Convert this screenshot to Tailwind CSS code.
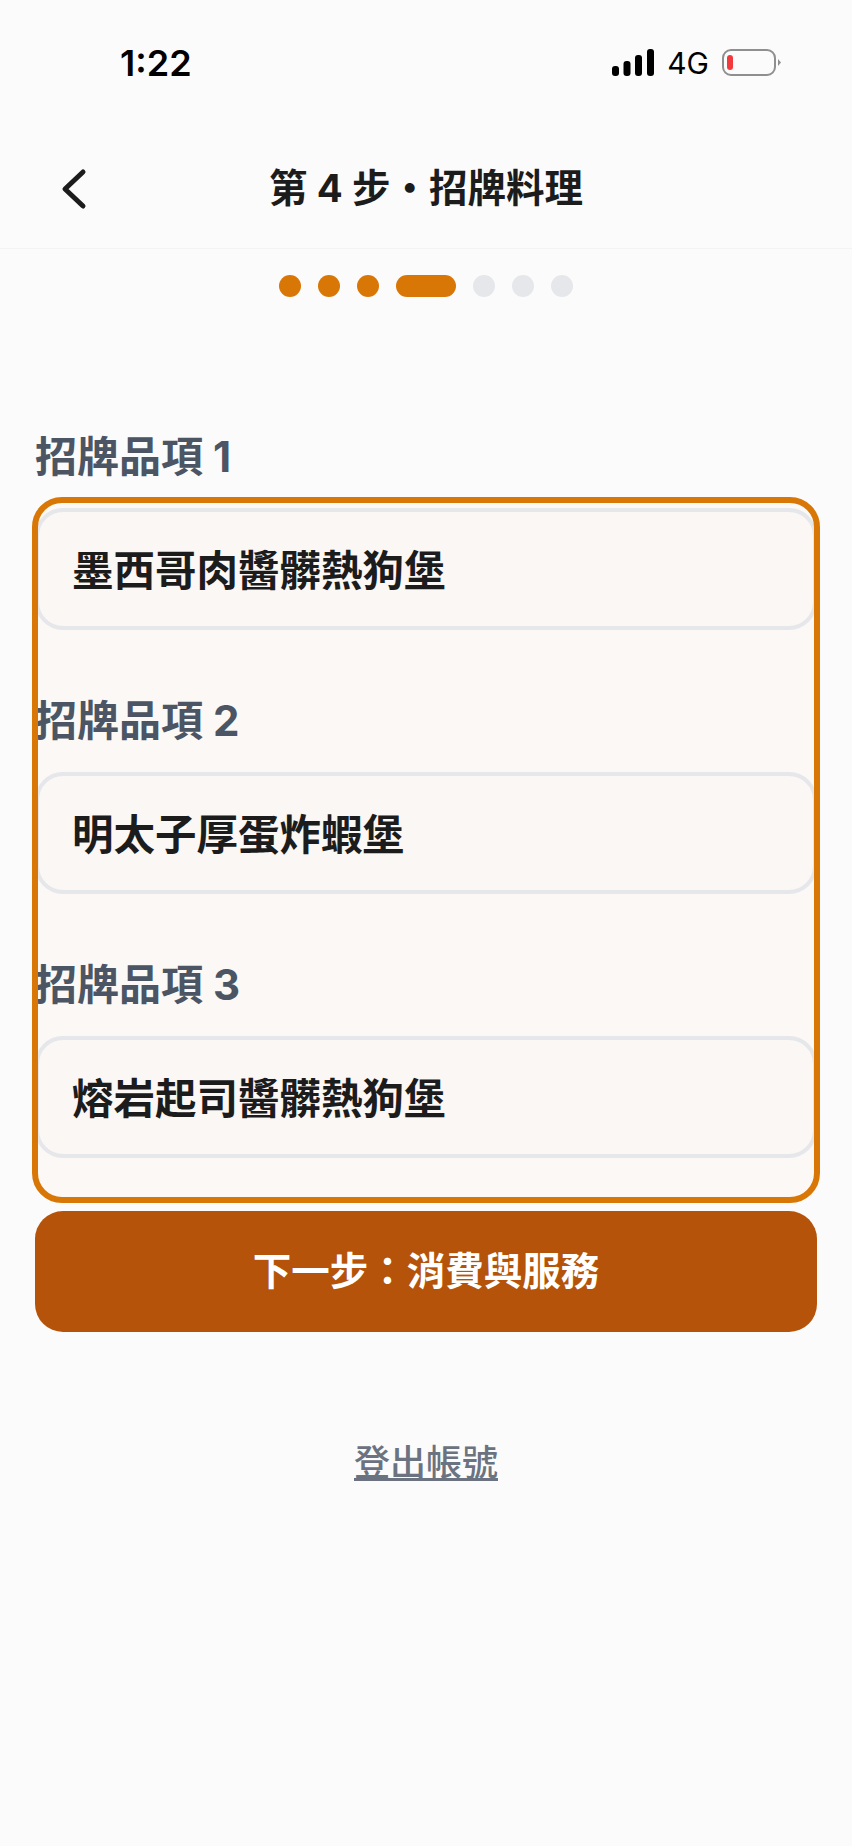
<!DOCTYPE html>
<html lang="zh-Hant">
<head>
  <meta charset="UTF-8" />
  <meta name="viewport" content="width=device-width, initial-scale=1.0" />
  <title>第 4 步・招牌料理</title>
  <script src="https://cdn.jsdelivr.net/npm/@tailwindcss/browser@4"></script>
</head>
<body class="bg-[#fbfbfb] text-[#1c1c1c] min-h-screen font-['Inter','Noto_Sans_CJK_TC',sans-serif]">

  <!-- status bar -->
  <div class="h-[104px] pl-[120px] pr-[70px] pt-[41px] flex justify-between items-start">
    <span class="text-[36px] leading-[44px] font-semibold text-black">1:22</span>
    <div class="flex items-center mt-[8px]">
      <svg width="42" height="28" viewBox="0 0 42 28" fill="#000">
        <rect x="0" y="17" width="7" height="10" rx="3"/>
        <rect x="11.500" y="12" width="7" height="15" rx="3"/>
        <rect x="23" y="6" width="7" height="21" rx="3"/>
        <rect x="35" y="0" width="7" height="27" rx="3"/>
      </svg>
      <span class="ml-[13px] text-[30px] leading-[28px] text-black">4G</span>
      <svg class="ml-[13px]" width="60" height="28" viewBox="0 0 60 28">
        <rect x="1" y="1" width="52" height="25" rx="8" fill="none" stroke="#8f8f8f" stroke-width="2"/>
        <rect x="5" y="6" width="6" height="15" rx="3" fill="#f23a3c"/>
        <path d="M56 10l3 3.500-3 3.500z" fill="#8f8f8f"/>
      </svg>
    </div>
  </div>

  <!-- header -->
  <header class="h-[145px] relative flex items-center justify-center border-b border-[#f3f3f3]">
    <svg class="absolute left-[60px] top-[64px]" width="28" height="42" viewBox="0 0 28 42" fill="none" stroke="#1c1c1c" stroke-width="5" stroke-linecap="round" stroke-linejoin="round">
      <path d="M23 4L5 21l18 17"/>
    </svg>
    <h1 class="text-[38.500px] leading-[48px] font-bold mt-[24px]">第 4 步・招牌料理</h1>
  </header>

  <!-- steps -->
  <div class="mt-[26px] flex justify-center gap-[17px]">
    <span class="w-[22px] h-[22px] rounded-full bg-[#d97706]"></span>
    <span class="w-[22px] h-[22px] rounded-full bg-[#d97706]"></span>
    <span class="w-[22px] h-[22px] rounded-full bg-[#d97706]"></span>
    <span class="w-[60px] h-[22px] rounded-full bg-[#d97706]"></span>
    <span class="w-[22px] h-[22px] rounded-full bg-[#e5e7eb]"></span>
    <span class="w-[22px] h-[22px] rounded-full bg-[#e5e7eb]"></span>
    <span class="w-[22px] h-[22px] rounded-full bg-[#e5e7eb]"></span>
  </div>

  <main class="mx-[35px] mt-[132px]">
    <label class="block text-[42px] leading-[56px] font-bold text-[#4b5563]">招牌品項 1</label>

    <div class="relative mt-[15px] pt-[8px] pb-[42px] flex flex-col bg-[#fbf8f6] rounded-[28px]">
      <!-- focus ring -->
      <div class="absolute -inset-[3px] border-[6px] border-[#d97706] rounded-[30px] pointer-events-none"></div>

      <div class="h-[122px] rounded-[28px] border-[4px] border-[#e5e7eb] bg-[#faf7f5] pl-[33px] pt-[5px] flex items-center text-[41.500px] font-bold">墨西哥肉醬髒熱狗堡</div>

      <label class="block mt-[63px] text-[42px] leading-[56px] font-bold text-[#4b5563]">招牌品項 2</label>
      <div class="mt-[23px] h-[122px] rounded-[28px] border-[4px] border-[#e5e7eb] bg-[#faf7f5] pl-[33px] pt-[5px] flex items-center text-[41.500px] font-bold">明太子厚蛋炸蝦堡</div>

      <label class="block mt-[63px] text-[42px] leading-[56px] font-bold text-[#4b5563]">招牌品項 3</label>
      <div class="mt-[23px] h-[122px] rounded-[28px] border-[4px] border-[#e5e7eb] bg-[#faf7f5] pl-[33px] pt-[5px] flex items-center text-[41.500px] font-bold">熔岩起司醬髒熱狗堡</div>
    </div>

    <button class="mt-[11px] w-full h-[121px] rounded-[28px] bg-[#b45309] text-white text-[38.500px] font-bold">下一步：消費與服務</button>

    <div class="mt-[106px] text-center">
      <a href="#" class="text-[36px] leading-[50px] font-medium text-[#6b7280] underline">登出帳號</a>
    </div>
  </main>
</body>
</html>
